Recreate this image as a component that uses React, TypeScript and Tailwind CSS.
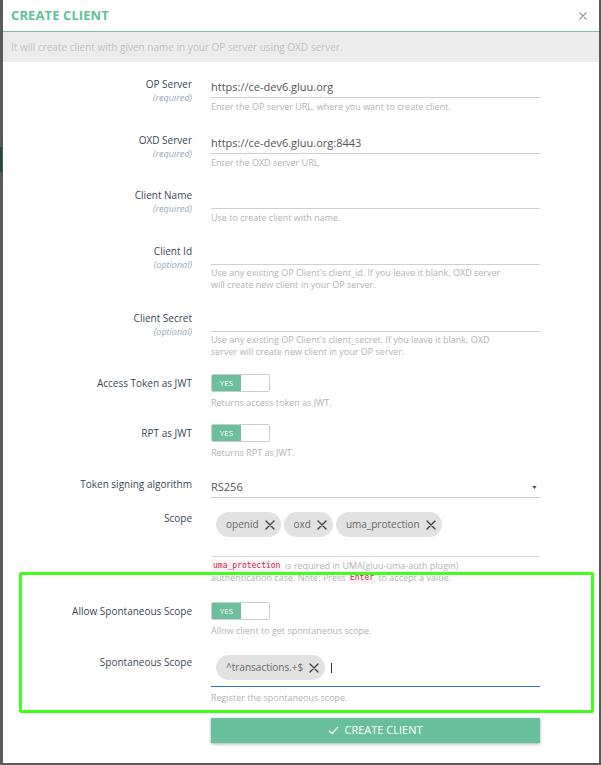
import React from "react";

function XIcon({ className }: { className?: string }) {
  return (
    <svg viewBox="0 0 10 10" className={className} fill="none" stroke="currentColor" strokeWidth="1.4" strokeLinecap="round">
      <path d="M1 1 L9 9 M9 1 L1 9" />
    </svg>
  );
}

function Label({ title, sub }: { title: string; sub?: string }) {
  return (
    <div className="w-[189px] shrink-0 text-right pt-0">
      <div className="text-[10px] leading-[14px] text-[#3b4754]">{title}</div>
      {sub && <div className="text-[9px] leading-[13px] italic text-[#94a8b8]">{sub}</div>}
    </div>
  );
}

function Help({ children, className }: { children: React.ReactNode; className?: string }) {
  return <div className={"text-[9px] leading-[11px] text-[#b2b2b2] " + (className || "mt-[3px]")}>{children}</div>;
}

function TextInput({ value }: { value?: string }) {
  return (
    <div className="h-[21px] border-b border-[#cfcfcf] text-[11px] leading-[20px] text-[#555]">{value}</div>
  );
}

function Toggle() {
  return (
    <div className="flex h-[18px] w-[59px] overflow-hidden rounded-[2px] border border-[#cccccc] bg-white">
      <div className="flex w-[29px] items-center justify-center bg-[#6cbf9c] text-[8px] text-white">YES</div>
      <div className="flex-1" />
    </div>
  );
}

function Chip({ text }: { text: string }) {
  return (
    <div className="flex h-[25px] items-center rounded-full bg-[#e2e2e2] pl-[10px] pr-[6px] text-[10px] text-[#666]">
      <span>{text}</span>
      <XIcon className="ml-[6px] h-[10px] w-[10px] text-[#444]" />
    </div>
  );
}

function Code({ children }: { children: React.ReactNode }) {
  return (
    <span className="inline-block rounded-[2px] bg-[#f9f2f4] px-[2px] align-top font-['DejaVu_Sans_Mono',monospace] text-[8px] leading-[12px] text-[#c7254e]">
      {children}
    </span>
  );
}

export default function App() {
  return (
    <div className="flex h-[765px] w-[601px] items-start bg-[#5a5a5a] font-['Open_Sans','Noto_Sans',sans-serif]">
      <div className="flex h-[765px] w-[3px] shrink-0 flex-col">
        <div className="h-[147px]" />
        <div className="h-[25px] w-[2px] bg-[#1e4b3b]" />
      </div>
      <div className="relative h-[763px] w-[596px] shrink-0 bg-white">
        {/* header */}
        <div className="flex h-[32px] items-center justify-between border-b border-[#76c2a4] pl-[8px] pr-[12px]">
          <div className="text-[13px] font-bold tracking-[0.1px] text-[#5ec198]">CREATE CLIENT</div>
          <XIcon className="h-[8px] w-[8px] text-[#8a8a8a]" />
        </div>
        <div className="flex h-[30px] items-center bg-[#ececec] pl-[8px] text-[10px] text-[#c2c2c2]">
          It will create client with given name in your OP server using OXD server.
        </div>

        <div className="pt-[15px]">
          <div className="mb-[21px] flex gap-[19px]">
            <Label title="OP Server" sub="(required)" />
            <div className="w-[329px]">
              <TextInput value="https://ce-dev6.gluu.org" />
              <Help>Enter the OP server URL, where you want to create client.</Help>
            </div>
          </div>

          <div className="mb-[20px] flex gap-[19px]">
            <Label title="OXD Server" sub="(required)" />
            <div className="w-[329px]">
              <TextInput value="https://ce-dev6.gluu.org:8443" />
              <Help>Enter the OXD server URL.</Help>
            </div>
          </div>

          <div className="mb-[21px] flex gap-[19px]">
            <Label title="Client Name" sub="(required)" />
            <div className="w-[329px]">
              <TextInput />
              <Help>Use to create client with name.</Help>
            </div>
          </div>

          <div className="mb-[20px] flex gap-[19px]">
            <Label title="Client Id" sub="(optional)" />
            <div className="w-[329px]">
              <TextInput />
              <Help className="mt-[2px] leading-[12px]">
                Use any existing OP Client's client_id. If you leave it blank, OXD server
                <br />
                will create new client in your OP server.
              </Help>
            </div>
          </div>

          <div className="mb-[16px] flex gap-[19px]">
            <Label title="Client Secret" sub="(optional)" />
            <div className="w-[329px]">
              <TextInput />
              <Help className="mt-[2px] leading-[12px]">
                Use any existing OP Client's client_secret. If you leave it blank, OXD
                <br />
                server will create new client in your OP server.
              </Help>
            </div>
          </div>

          <div className="mb-[16px] flex gap-[19px]">
            <div className="pt-[2px]">
              <Label title="Access Token as JWT" />
            </div>
            <div className="w-[329px]">
              <Toggle />
              <Help className="mt-[5px]">Returns access token as JWT.</Help>
            </div>
          </div>

          <div className="mb-[19px] flex gap-[19px]">
            <div className="pt-[2px]">
              <Label title="RPT as JWT" />
            </div>
            <div className="w-[329px]">
              <Toggle />
              <Help className="mt-[5px]">Returns RPT as JWT.</Help>
            </div>
          </div>

          <div className="mb-[13px] flex gap-[19px]">
            <Label title="Token signing algorithm" />
            <div className="w-[329px]">
              <div className="flex h-[21px] items-center justify-between border-b border-[#cfcfcf] pr-[3px] text-[11px] text-[#555]">
                <span>RS256</span>
                <svg viewBox="0 0 6 4" className="h-[3px] w-[5px]">
                  <path d="M0 0 L6 0 L3 4 Z" fill="#555" />
                </svg>
              </div>
            </div>
          </div>

          <div className="mb-[18px] flex gap-[19px]">
            <Label title="Scope" />
            <div className="w-[329px]">
              <div className="h-[46px] border-b border-[#d9d9d9] pl-[5px] pt-[1px]">
                <div className="flex gap-[3px]">
                  <Chip text="openid" />
                  <Chip text="oxd" />
                  <Chip text="uma_protection" />
                </div>
              </div>
              <div className="mt-[3px] text-[9px] leading-[12px] text-[#b2b2b2]">
                <Code>uma_protection</Code> is required in UMA(gluu-uma-auth plugin)
                <br />
                authentication case. Note: Press <Code>Enter</Code> to accept a value.
              </div>
            </div>
          </div>

          <div className="mb-[19px] flex gap-[19px]">
            <div className="pt-[2px]">
              <Label title="Allow Spontaneous Scope" />
            </div>
            <div className="w-[329px]">
              <Toggle />
              <Help className="mt-[5px]">Allow client to get spontaneous scope.</Help>
            </div>
          </div>

          <div className="mb-[15px] flex gap-[19px]">
            <Label title="Spontaneous Scope" />
            <div className="w-[329px]">
              <div className="h-[32px] border-b border-[#2f6fd0] pl-[5px]">
                <div className="flex items-center">
                  <Chip text="^transactions.+$" />
                  <div className="ml-[6px] h-[10px] w-px bg-[#333]" />
                </div>
              </div>
              <Help className="mt-[5px]">Register the spontaneous scope.</Help>
            </div>
          </div>

          <div className="flex gap-[19px]">
            <div className="w-[189px] shrink-0" />
            <button className="flex h-[25px] w-[329px] items-center justify-center gap-[5px] bg-[#67bf9c] text-[11px] text-white shadow-[0_1px_3px_rgba(0,0,0,0.35)]">
              <svg viewBox="0 0 12 10" className="h-[9px] w-[11px]" fill="none" stroke="white" strokeWidth="1.3">
                <path d="M1 5 L4.5 8.5 L11 1" />
              </svg>
              <span>CREATE CLIENT</span>
            </button>
          </div>
        </div>

        {/* highlight annotation */}
        <div className="pointer-events-none absolute left-[16px] top-[572px] h-[141px] w-[575px] rounded-[2px] border-[3px] border-[#41ff1c]" />
      </div>
    </div>
  );
}
